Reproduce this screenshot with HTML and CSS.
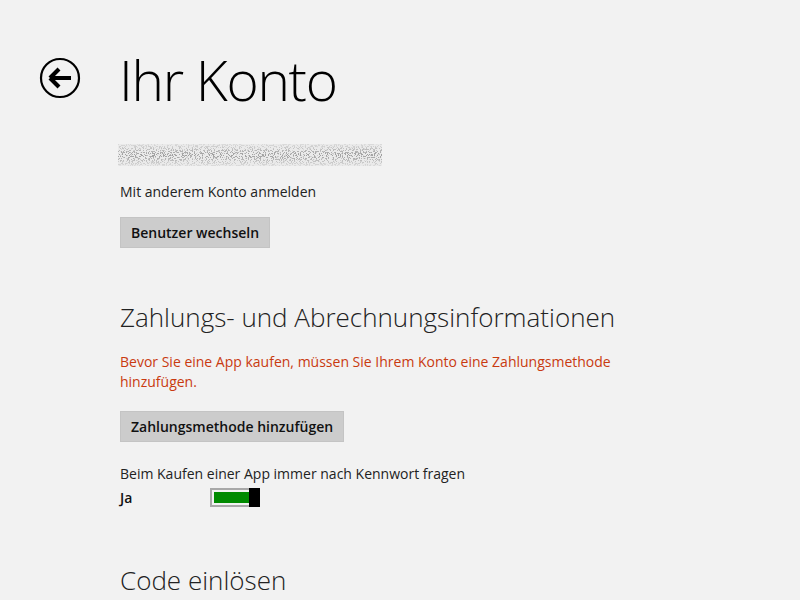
FILE: index.html
```html
<!DOCTYPE html>
<html lang="de">
<head>
  <meta charset="UTF-8" />
  <title>Ihr Konto</title>
  <link rel="stylesheet" href="styles.css">
</head>
<body>
  <div class="page">
    <div class="header">
      <div class="back-btn" title="Zurück">
        <svg width="42" height="42" viewBox="0 0 42 42">
          <circle cx="21" cy="21" r="19" fill="none" stroke="#000" stroke-width="2.2"/>
          <path d="M11 21 L20 12 M11 21 L20 30 M11 21 H32" fill="none" stroke="#000" stroke-width="4.2" stroke-linecap="butt" stroke-linejoin="miter"/>
        </svg>
      </div>
      <h1 class="title">Ihr Konto</h1>
    </div>

    <div class="content">
      <div class="email">
        <svg width="266" height="26" viewBox="0 0 266 26">
          <defs>
            <filter id="noise" x="0" y="0" width="100%" height="100%">
              <feTurbulence type="fractalNoise" baseFrequency="0.85" numOctaves="3" seed="11" result="t"/>
              <feColorMatrix in="t" type="matrix" values="0 0 0 0 0.3  0 0 0 0 0.3  0 0 0 0 0.3  0 0 0 -18 8.6"/>
              <feComposite in2="SourceGraphic" operator="in"/>
            </filter>
            <linearGradient id="fade" x1="0" y1="0" x2="0" y2="1">
              <stop offset="0" stop-color="#000" stop-opacity="0.15"/>
              <stop offset="0.5" stop-color="#000" stop-opacity="0.9"/>
              <stop offset="1" stop-color="#000" stop-opacity="0.15"/>
            </linearGradient>
          </defs>
          <rect x="0" y="2" width="264" height="22" fill="#dcdcdc" opacity="0.35"/>
          <rect x="0" y="2" width="264" height="22" fill="url(#fade)" filter="url(#noise)"/>
        </svg>
      </div>
      <p class="text">Mit anderem Konto anmelden</p>
      <button class="btn">Benutzer wechseln</button>

      <h2 class="section">Zahlungs- und Abrechnungsinformationen</h2>
      <p class="text warning">Bevor Sie eine App kaufen, müssen Sie Ihrem Konto eine Zahlungsmethode hinzufügen.</p>
      <button class="btn">Zahlungsmethode hinzufügen</button>

      <p class="text option-label">Beim Kaufen einer App immer nach Kennwort fragen</p>
      <div class="toggle-row">
        <span class="toggle-state">Ja</span>
        <div class="toggle">
          <div class="toggle-fill"></div>
          <div class="toggle-thumb"></div>
        </div>
      </div>

      <h2 class="section">Code einlösen</h2>
    </div>
  </div>
</body>
</html>
```

FILE: styles.css
```css
body {
  margin: 0;
  background-color: #f2f2f2;
  font-family: 'Open Sans', 'Noto Sans', sans-serif;
  color: #1a1a1a;
  overflow: hidden;
}
.page {
  width: 800px;
  height: 600px;
}
.header {
  display: flex;
  align-items: flex-start;
  padding-top: 42px;
}
.back-btn {
  width: 42px;
  height: 42px;
  margin-left: 39px;
  margin-top: 15px;
}
.title {
  margin: 0 0 0 38px;
  font-size: 55px;
  font-weight: 300;
  line-height: 76px;
  color: #000;
  letter-spacing: -1.3px;
}
.content {
  padding-left: 120px;
}
.email {
  height: 26px;
  margin-top: 24px;
  margin-left: -2px;
}
.text {
  margin: 0;
  font-size: 14px;
  line-height: 20px;
  color: #222;
}
.email + .text {
  margin-top: 14px;
}
.btn {
  display: block;
  margin-top: 15px;
  padding: 0 10px;
  height: 31px;
  background-color: #cccccc;
  border: 1px solid #c4c4c4;
  font-family: inherit;
  font-size: 14px;
  font-weight: 600;
  color: #111;
}
.section {
  margin: 51px 0 0 0;
  font-size: 26px;
  font-weight: 300;
  line-height: 36px;
  color: #222;
}
.warning {
  width: 520px;
  margin-top: 17px;
  color: #c93a10;
}
.warning + .btn {
  margin-top: 19px;
}
.option-label {
  margin-top: 22px;
}
.toggle-row {
  display: flex;
  align-items: center;
  height: 24px;
  margin-top: 1px;
}
.toggle-state {
  width: 90px;
  font-size: 14px;
  font-weight: 600;
  color: #111;
}
.toggle {
  display: flex;
  width: 50px;
  height: 19px;
  box-sizing: border-box;
  border: 2px solid #a8a8a8;
  border-right: none;
  padding: 2px 0 2px 2px;
  position: relative;
}
.toggle-fill {
  flex: 1;
  background-color: #008a00;
}
.toggle-thumb {
  position: absolute;
  right: 0;
  top: -2px;
  width: 11px;
  height: 19px;
  background-color: #000;
}
.toggle-row + .section {
  margin-top: 53px;
}
```
